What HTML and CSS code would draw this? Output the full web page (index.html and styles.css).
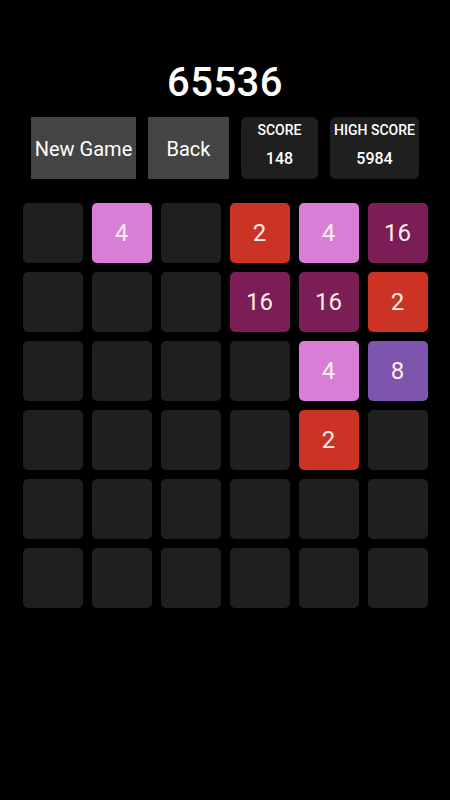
FILE: index.html
```html
<!DOCTYPE html>
<html lang="en">
<head>
    <meta charset="UTF-8">
    <meta name="viewport" content="width=device-width, initial-scale=1.0">
    <title>65536</title>
    <link rel="stylesheet" href="styles.css">
</head>
<body>
    <div class="game">
        <h1 class="title">65536</h1>

        <div class="controls">
            <button class="btn btn-new">New Game</button>
            <button class="btn btn-back">Back</button>
            <div class="score-box score">
                <div class="score-label">SCORE</div>
                <div class="score-value">148</div>
            </div>
            <div class="score-box best">
                <div class="score-label">HIGH SCORE</div>
                <div class="score-value">5984</div>
            </div>
        </div>

        <div class="board">
            <!-- row 1 -->
            <div class="tile"></div>
            <div class="tile t4">4</div>
            <div class="tile"></div>
            <div class="tile t2">2</div>
            <div class="tile t4">4</div>
            <div class="tile t16">16</div>
            <!-- row 2 -->
            <div class="tile"></div>
            <div class="tile"></div>
            <div class="tile"></div>
            <div class="tile t16">16</div>
            <div class="tile t16">16</div>
            <div class="tile t2">2</div>
            <!-- row 3 -->
            <div class="tile"></div>
            <div class="tile"></div>
            <div class="tile"></div>
            <div class="tile"></div>
            <div class="tile t4">4</div>
            <div class="tile t8">8</div>
            <!-- row 4 -->
            <div class="tile"></div>
            <div class="tile"></div>
            <div class="tile"></div>
            <div class="tile"></div>
            <div class="tile t2">2</div>
            <div class="tile"></div>
            <!-- row 5 -->
            <div class="tile"></div>
            <div class="tile"></div>
            <div class="tile"></div>
            <div class="tile"></div>
            <div class="tile"></div>
            <div class="tile"></div>
            <!-- row 6 -->
            <div class="tile"></div>
            <div class="tile"></div>
            <div class="tile"></div>
            <div class="tile"></div>
            <div class="tile"></div>
            <div class="tile"></div>
        </div>
    </div>
</body>
</html>
```

FILE: styles.css
```css
body {
    background-color: black;
    color: white;
    font-family: Roboto, "Noto Sans", Arial, sans-serif;
    margin: 0;
    height: 100vh;
}

.game {
    display: flex;
    flex-direction: column;
    align-items: center;
    padding-top: 59px;
}

.title {
    margin: 0 0 11px 0;
    font-size: 40px;
    line-height: 47px;
    font-weight: 500;
    letter-spacing: 0.5px;
}

.controls {
    display: flex;
    gap: 12px;
    height: 62px;
}

.btn {
    background-color: #444444;
    color: white;
    border: none;
    border-radius: 0;
    font-family: inherit;
    font-size: 20px;
    padding: 2px 0 0 0;
    cursor: pointer;
}

.btn-new {
    width: 105px;
}

.btn-back {
    width: 81px;
}

.score-box {
    background-color: #1f1f1f;
    border-radius: 6px;
    display: flex;
    flex-direction: column;
    align-items: center;
    padding-top: 5px;
    box-sizing: border-box;
}

.score {
    width: 77px;
}

.best {
    width: 89px;
}

.score-label {
    font-size: 14px;
    font-weight: 500;
    line-height: 17px;
}

.score-value {
    font-size: 16px;
    font-weight: 500;
    margin-top: 10px;
}

.board {
    margin-top: 24px;
    display: grid;
    grid-template-columns: repeat(6, 60px);
    grid-auto-rows: 60px;
    gap: 9px;
}

.tile {
    background-color: #1f1f1f;
    border-radius: 5px;
    display: flex;
    justify-content: center;
    align-items: center;
    font-size: 24px;
    color: #fbefea;
}

.t2 {
    background-color: #cb3325;
}

.t4 {
    background-color: #d87ed6;
}

.t8 {
    background-color: #7d55ae;
}

.t16 {
    background-color: #7b1e55;
}
```
